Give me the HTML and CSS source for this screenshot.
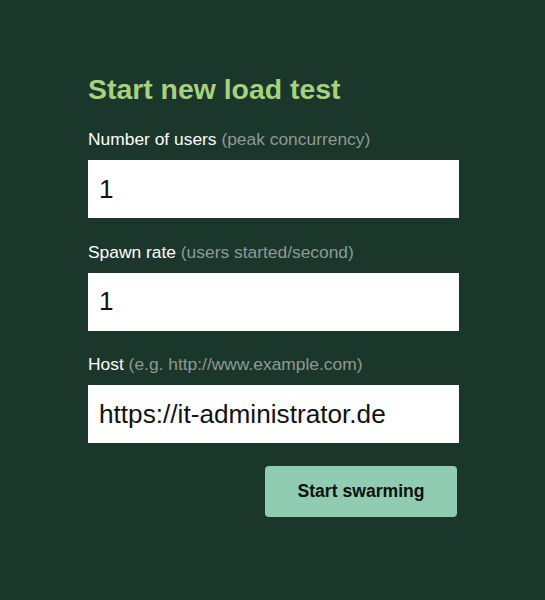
FILE: index.html
```html
<!DOCTYPE html>
<html lang="en">
<head>
    <meta charset="UTF-8">
    <meta name="viewport" content="width=device-width, initial-scale=1.0">
    <title>Locust</title>
    <link rel="stylesheet" href="styles.css">
</head>
<body>
    <form class="start-form">
        <h2 class="form-title">Start new load test</h2>

        <div class="field">
            <label for="user_count">Number of users <span class="hint">(peak concurrency)</span></label>
            <input type="text" id="user_count" name="user_count" value="1">
        </div>

        <div class="field">
            <label for="spawn_rate">Spawn rate <span class="hint">(users started/second)</span></label>
            <input type="text" id="spawn_rate" name="spawn_rate" value="1">
        </div>

        <div class="field">
            <label for="host">Host <span class="hint">(e.g. http://www.example.com)</span></label>
            <input type="text" id="host" name="host" value="https://it-administrator.de">
        </div>

        <div class="actions">
            <button type="submit" class="start-button">Start swarming</button>
        </div>
    </form>
</body>
</html>
```

FILE: styles.css
```css
body {
    font-family: "Liberation Sans", Arial, sans-serif;
    background-color: #1b362b;
    margin: 0;
    height: 100vh;
}
.start-form {
    width: 371px;
    margin-left: 88px;
    padding-top: 72px;
}
.form-title {
    font-size: 28.4px;
    line-height: 34px;
    font-weight: bold;
    color: #a6d27e;
    margin: 0 0 22px 0;
}
.field {
    margin-bottom: 22.5px;
}
.field label {
    display: block;
    font-size: 17.4px;
    line-height: 22px;
    color: #ffffff;
    margin-bottom: 10px;
}
.hint {
    color: #8e9a94;
}
.field input {
    display: block;
    box-sizing: border-box;
    width: 100%;
    height: 58px;
    padding: 0 11px;
    border: none;
    border-radius: 0;
    background-color: #ffffff;
    font-family: "Liberation Sans", Arial, sans-serif;
    font-size: 26.2px;
    color: #111111;
    outline: none;
}
.actions {
    display: flex;
    justify-content: flex-end;
    padding-right: 2px;
}
.start-button {
    width: 192px;
    height: 51px;
    border: none;
    border-radius: 4px;
    background-color: #8fccb1;
    color: #111111;
    font-family: "Liberation Sans", Arial, sans-serif;
    font-size: 17.6px;
    font-weight: bold;
    cursor: pointer;
}
```
